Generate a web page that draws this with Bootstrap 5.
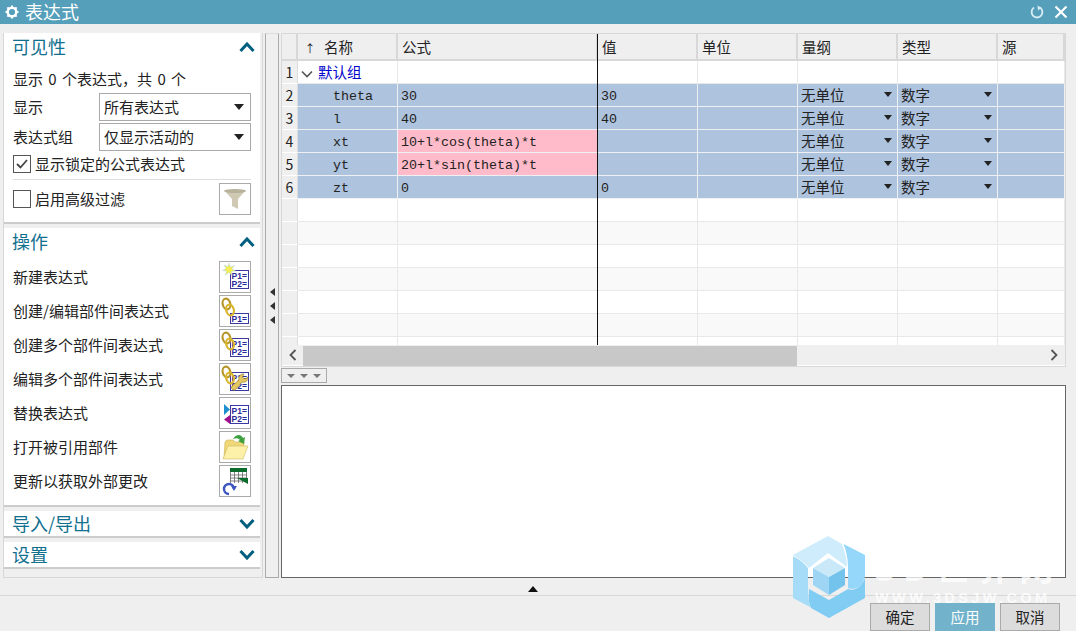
<!DOCTYPE html>
<html lang="zh-CN">
<head>
    <meta charset="UTF-8">
    <title>表达式</title>
    <link href="https://cdn.jsdelivr.net/npm/bootstrap@5.3.0/dist/css/bootstrap.min.css" rel="stylesheet">
    <style>
        html, body { height: 631px; overflow: hidden; }
        body {
            background: #efefef;
            color: #222;
            font-family: "Noto Sans CJK SC", sans-serif;
            font-size: 14.5px;
            line-height: 1.2;
        }
        .app-root { height: 631px; position: relative; overflow: hidden; }
        .title-bar { height: 24px; background: #559fba; color: #fff; font-size: 18px; padding: 0 8px 0 4px; }
        .main-area { height: 545px; margin-top: 9px; padding-left: 3px; gap: 2px; }

        .side-panel { width: 260px; border: 1px solid #d8d8d8; border-top: 0; padding-right: 2px; gap: 4px; font-size: 15px; }
        .side-sec { background: #fff; border-bottom: 2px solid #ccc; }
        .side-head { font-size: 18px; color: #11708f; height: 28px; padding: 0 5px 0 8px; }
        .side-body { padding: 4px 9px 0 9px; }
        .info-line { height: 27px; word-spacing: 2px; }
        .field-row { height: 30px; }
        .field-row label { width: 86px; }
        .field-row .form-select {
            width: 152px; height: 28px; padding: 0 0 0 4px;
            border: 1px solid #aaa; border-radius: 0; color: #222;
            font-size: 15px; font-family: inherit;
            background-image: url("data:image/svg+xml,%3Csvg xmlns='http://www.w3.org/2000/svg' width='10' height='6'%3E%3Cpath d='M0 0h10L5 6z' fill='%23222'/%3E%3C/svg%3E");
            background-size: 10px 6px; background-position: right 6px center;
        }
        .chk-row { height: 24px; gap: 4px; }
        .chk-row .form-check-input {
            width: 18px; height: 18px; margin: 0; border: 1px solid #555; border-radius: 0; flex: none;
            background-color: #fff;
        }
        .chk-row .form-check-input:checked {
            background-color: #fff; border-color: #555;
            background-image: url("data:image/svg+xml,%3Csvg xmlns='http://www.w3.org/2000/svg' viewBox='0 0 18 18'%3E%3Cpath d='M4 9l3.5 3.5L14 5' fill='none' stroke='%23444' stroke-width='1.8'/%3E%3C/svg%3E");
            background-size: 18px 18px;
        }
        .filter-row { height: 39px; border-top: 1px solid #ddd; margin-top: 3px; }
        .tool-btn {
            width: 32px; height: 32px; padding: 0; border: 1px solid #aaa; border-radius: 0;
            background: #fff; display: flex; align-items: center; justify-content: center; flex: none;
        }
        .action-row { height: 34px; }
        .ops-body { padding: 4px 9px 7px 9px; }

        .split-bar { width: 14px; border: 1px solid #aaa; border-top-color: #ddd; gap: 6px; padding-left: 4px; }
        .tri-left { width: 0; height: 0; border-top: 4px solid transparent; border-bottom: 4px solid transparent; border-right: 5px solid #333; }

        .right-col { width: 785px; }
        .grid-box { height: 334px; border: 1px solid #d8d8d8; position: relative; background: #fff; }
        .grid-scroll { height: 311px; overflow: hidden; }
        .expr-grid { table-layout: fixed; width: 783px; border-collapse: separate; border-spacing: 0; }
        .expr-grid th, .expr-grid td {
            height: 23px; padding: 0 3px; font-weight: 400; white-space: nowrap; overflow: hidden;
            border-right: 1px solid #e8e8e8; border-bottom: 1px solid #e8e8e8;
        }
        .expr-grid th { height: 27px; background: #efefef; border-right: 2px solid #d8d8d8; border-bottom: 2px solid #d8d8d8; padding: 1px 0 0 4px; }
        .expr-grid .rownum { background: #efefef; text-align: center; padding: 0; border-right: 1px solid #ddd; border-bottom: 1px solid #fff; font-size: 14px; }
        .expr-grid .mono { font-family: "Liberation Mono", "Noto Sans CJK SC", monospace; font-size: 13.33px; padding-top: 3px; }
        .expr-grid .name-cell { padding-left: 35px; }
        .expr-grid tr.picked td:not(.rownum) { background: #aec3dd; border-color: #eef0f4; }
        .expr-grid tr.picked td.bad-cell { background: #ffbbc9; }
        .expr-grid tr.alt-row td:not(.rownum) { background: #f9f9f9; }
        .sort-mark { display: inline-block; width: 16px; margin-right: 6px; font-size: 11px; text-align: center; }
        .group-name { color: #0000cc; }
        .drop-tri { width: 0; height: 0; border-left: 4.5px solid transparent; border-right: 4.5px solid transparent; border-top: 5px solid #222; margin-right: 2px; }
        .col-mark { position: absolute; left: 315px; top: 0; width: 1px; height: 311px; background: #111; }

        .h-scroll { height: 20px; background: #efefef; }
        .h-thumb { position: absolute; left: 21px; top: 312px; width: 494px; height: 20px; background: #c8c8c8; }
        .h-arrow { width: 22px; }

        .sash-tools { width: 46px; height: 15px; margin: 1px 0 2px; border: 1px solid #aaa; gap: 5px; }
        .tri-down { width: 0; height: 0; border-left: 4px solid transparent; border-right: 4px solid transparent; border-top: 4px solid #777; }
        .note-area { flex: 1; border: 1px solid #666; border-radius: 0; resize: none; background: #fff; }

        .sash-mid { height: 17px; padding: 5px 10px 0 0; }
        .tri-up { width: 0; height: 0; border-left: 5px solid transparent; border-right: 5px solid transparent; border-bottom: 6px solid #111; }
        .foot-bar { border-top: 1px solid #d8d8d8; height: 36px; padding: 7px 16px 0 0; gap: 5px; }
        .foot-bar .btn {
            width: 60px; height: 28px; padding: 0; border: 1px solid #aaa; border-radius: 0;
            background: #dcdcdc; color: #222; font-size: 14.5px; line-height: 26px;
        }
        .foot-bar .btn.btn-apply { background: #72b3cb; border-color: #72b3cb; color: #fff; }

        .wm-logo { position: absolute; left: 793px; top: 536px; pointer-events: none; }
        .wm-text { position: absolute; left: 875px; top: 544px; color: #fff; opacity: .75; pointer-events: none; white-space: nowrap; }
        .wm-big { font-size: 34px; font-weight: 700; line-height: 46px; letter-spacing: 8px; }
        .wm-small { font-family: "Liberation Sans", sans-serif; font-size: 14.5px; font-weight: 700; letter-spacing: 3.4px; line-height: 9px; margin-top: 4px; }
    </style>
</head>
<body>
    <!-- shared bits of the small toolbar icons -->
    <svg width="0" height="0" class="position-absolute">
        <defs>
            <g id="box-two">
                <rect x="10.5" y="8.5" width="18" height="18" fill="#fff" stroke="#3a3aa0"/>
                <text x="11.5" y="16.5" font-family="Liberation Sans" font-size="8.5" font-weight="700" fill="#2a2a9a">P1=</text>
                <text x="11.5" y="25" font-family="Liberation Sans" font-size="8.5" font-weight="700" fill="#2a2a9a">P2=</text>
            </g>
            <g id="links">
                <ellipse cx="6.5" cy="8" rx="3.8" ry="5.4" fill="none" stroke="#b8962a" stroke-width="2.2" transform="rotate(-15 6.5 8)"/>
                <ellipse cx="10" cy="14" rx="3.8" ry="5.4" fill="none" stroke="#d9b52c" stroke-width="2.2" transform="rotate(-15 10 14)"/>
            </g>
        </defs>
    </svg>

    <div class="app-root d-flex flex-column">
        <div class="title-bar d-flex align-items-center">
            <svg width="16" height="16" viewBox="0 0 16 16" style="margin-right:1px">
                <circle cx="8" cy="8" r="4.3" fill="none" stroke="#fff" stroke-width="2.4"/>
                <path d="M8 1.5v2.5M8 12v2.5M1.5 8H4M12 8h2.5M3.4 3.4l1.8 1.8M10.8 10.8l1.8 1.8M3.4 12.6l1.8-1.8M10.8 5.2l1.8-1.8" stroke="#fff" stroke-width="2"/>
            </svg>
            <span class="ms-1">表达式</span>
            <svg width="14" height="14" viewBox="0 0 14 14" class="ms-auto" style="margin-right:10px">
                <path d="M4 2.6A5.4 5.4 0 1 0 10 2.6" fill="none" stroke="#d8eef5" stroke-width="1.8"/>
                <path d="M7.5 0.5L11.5 2.8 8 5.5z" fill="#d8eef5"/>
            </svg>
            <svg width="14" height="14" viewBox="0 0 14 14">
                <path d="M1.5 1.5l11 11M12.5 1.5l-11 11" stroke="#fff" stroke-width="2.2"/>
            </svg>
        </div>

        <div class="main-area d-flex">
            <!-- left panel -->
            <div class="side-panel d-flex flex-column">
                <section class="side-sec" style="height:191px">
                    <div class="side-head d-flex align-items-center justify-content-between">
                        <span>可见性</span>
                        <svg width="16" height="10" viewBox="0 0 16 10"><path d="M1.5 9L8 2l6.500 7" fill="none" stroke="#005f7f" stroke-width="3"/></svg>
                    </div>
                    <div class="side-body">
                        <div class="info-line d-flex align-items-center">显示 0 个表达式，共 0 个</div>
                        <div class="field-row d-flex align-items-center">
                            <label>显示</label>
                            <select class="form-select"><option>所有表达式</option></select>
                        </div>
                        <div class="field-row d-flex align-items-center">
                            <label>表达式组</label>
                            <select class="form-select"><option>仅显示活动的</option></select>
                        </div>
                        <div class="chk-row d-flex align-items-center">
                            <input class="form-check-input" type="checkbox" checked>
                            <span>显示锁定的公式表达式</span>
                        </div>
                        <div class="filter-row d-flex align-items-center justify-content-between">
                            <div class="chk-row d-flex align-items-center">
                                <input class="form-check-input" type="checkbox">
                                <span>启用高级过滤</span>
                            </div>
                            <button class="tool-btn" type="button">
                                <svg width="24" height="24" viewBox="0 0 24 24"><path d="M1 3h22L15 12v10l-6-3v-7z" fill="#cfc9b4"/><ellipse cx="12" cy="4" rx="11" ry="2" fill="#b8b29c"/></svg>
                            </button>
                        </div>
                    </div>
                </section>

                <section class="side-sec" style="height:279px">
                    <div class="side-head d-flex align-items-center justify-content-between">
                        <span>操作</span>
                        <svg width="16" height="10" viewBox="0 0 16 10"><path d="M1.5 9L8 2l6.500 7" fill="none" stroke="#005f7f" stroke-width="3"/></svg>
                    </div>
                    <div class="ops-body">
                        <div class="action-row d-flex align-items-center justify-content-between">
                            <span>新建表达式</span>
                            <button class="tool-btn" type="button">
                                <svg width="30" height="30" viewBox="0 0 30 30">
                                    <use href="#box-two"/>
                                    <path d="M9 1l1.500 4 4-1.500-2.500 3.500 3.500 2-4 .5.500 4-3-3-3.500 2.500 1-4-4-.5 3.500-2-2-3.500 4 1.500z" fill="#f4ee50" stroke="#bcd8f0" stroke-width=".6"/>
                                </svg>
                            </button>
                        </div>
                        <div class="action-row d-flex align-items-center justify-content-between">
                            <span>创建/编辑部件间表达式</span>
                            <button class="tool-btn" type="button">
                                <svg width="30" height="30" viewBox="0 0 30 30">
                                    <rect x="10.500" y="17.500" width="18" height="10" fill="#fff" stroke="#3a3aa0"/>
                                    <text x="11.500" y="26" font-family="Liberation Sans" font-size="8.500" font-weight="700" fill="#2a2a9a">P1=</text>
                                    <use href="#links"/>
                                </svg>
                            </button>
                        </div>
                        <div class="action-row d-flex align-items-center justify-content-between">
                            <span>创建多个部件间表达式</span>
                            <button class="tool-btn" type="button">
                                <svg width="30" height="30" viewBox="0 0 30 30"><use href="#box-two"/><use href="#links"/></svg>
                            </button>
                        </div>
                        <div class="action-row d-flex align-items-center justify-content-between">
                            <span>编辑多个部件间表达式</span>
                            <button class="tool-btn" type="button">
                                <svg width="30" height="30" viewBox="0 0 30 30">
                                    <use href="#box-two"/><use href="#links"/>
                                    <path d="M28 13a4.500 4.500 0 0 1-6 5l-6 7a2.500 2.500 0 0 1-4-3l7-6a4.500 4.500 0 0 1 5-6l-2 3 3 2z" fill="#e6c860" stroke="#9a8430" stroke-width=".7"/>
                                </svg>
                            </button>
                        </div>
                        <div class="action-row d-flex align-items-center justify-content-between">
                            <span>替换表达式</span>
                            <button class="tool-btn" type="button">
                                <svg width="30" height="30" viewBox="0 0 30 30">
                                    <g transform="translate(0,-1)"><use href="#box-two"/></g>
                                    <path d="M4 6l6 5.500-6 5.500z" fill="#1f8fd0"/>
                                    <path d="M10 17v9l-6-4.500z" fill="#a0108c"/>
                                </svg>
                            </button>
                        </div>
                        <div class="action-row d-flex align-items-center justify-content-between">
                            <span>打开被引用部件</span>
                            <button class="tool-btn" type="button">
                                <svg width="30" height="30" viewBox="0 0 30 30">
                                    <path d="M4 26L5 10l2-2h6l2 2h9v6z" fill="#f0d878" stroke="#c8b058" stroke-width=".6"/>
                                    <path d="M3 27L8 14h20l-5 13z" fill="#fdf0a8" stroke="#d0b860" stroke-width=".6"/>
                                    <path d="M13 7c3-5 8-5 10-1l2-1-1 7-6-3 2-1c-2-2-4-2-7-1z" fill="#3fa03f"/>
                                </svg>
                            </button>
                        </div>
                        <div class="action-row d-flex align-items-center justify-content-between">
                            <span>更新以获取外部更改</span>
                            <button class="tool-btn" type="button">
                                <svg width="30" height="30" viewBox="0 0 30 30">
                                    <rect x="10" y="2" width="17" height="4" fill="#0d6b2c"/>
                                    <path d="M10.500 6v11M14.500 6v11M18.500 6v11M22.500 6v11M26.500 6v11M10 9h17M10 12h17M10 15h17" stroke="#666" stroke-width=".8"/>
                                    <path d="M17 12l11 6v-6z" fill="#0d6b2c"/>
                                    <path d="M14 23A5 5 0 1 0 9 28" fill="none" stroke="#3d56c0" stroke-width="2.400"/>
                                    <path d="M11 20h6l-3 5z" fill="#3d56c0"/>
                                </svg>
                            </button>
                        </div>
                    </div>
                </section>

                <section class="side-sec">
                    <div class="side-head d-flex align-items-center justify-content-between" style="height:25px">
                        <span>导入/导出</span>
                        <svg width="16" height="10" viewBox="0 0 16 10"><path d="M1.500 1L8 8l6.500-7" fill="none" stroke="#005f7f" stroke-width="3"/></svg>
                    </div>
                </section>
                <section class="side-sec">
                    <div class="side-head d-flex align-items-center justify-content-between" style="height:25px">
                        <span>设置</span>
                        <svg width="16" height="10" viewBox="0 0 16 10"><path d="M1.500 1L8 8l6.500-7" fill="none" stroke="#005f7f" stroke-width="3"/></svg>
                    </div>
                </section>
            </div>

            <!-- sash between panel and grid -->
            <div class="split-bar d-flex flex-column justify-content-center">
                <span class="tri-left"></span>
                <span class="tri-left"></span>
                <span class="tri-left"></span>
            </div>

            <!-- expression grid and note area -->
            <div class="right-col d-flex flex-column">
                <div class="grid-box">
                    <div class="grid-scroll">
                        <table class="expr-grid">
                            <colgroup>
                                <col style="width:16px"><col style="width:100px"><col style="width:200px"><col style="width:100px">
                                <col style="width:100px"><col style="width:100px"><col style="width:100px"><col style="width:67px">
                            </colgroup>
                            <thead>
                                <tr>
                                    <th></th>
                                    <th><span class="sort-mark">↑</span>名称</th>
                                    <th>公式</th><th>值</th><th>单位</th><th>量纲</th><th>类型</th><th>源</th>
                                </tr>
                            </thead>
                            <tbody id="gridRows"></tbody>
                        </table>
                    </div>
                    <div class="h-scroll d-flex align-items-center justify-content-between">
                        <span class="h-arrow d-flex justify-content-center">
                            <svg width="8" height="12" viewBox="0 0 8 12"><path d="M6.500 1L1.500 6l5 5" fill="none" stroke="#555" stroke-width="1.800"/></svg>
                        </span>
                        <span class="h-arrow d-flex justify-content-center">
                            <svg width="8" height="12" viewBox="0 0 8 12"><path d="M1.500 1l5 5-5 5" fill="none" stroke="#555" stroke-width="1.800"/></svg>
                        </span>
                    </div>
                    <div class="h-thumb"></div>
                    <div class="col-mark"></div>
                </div>
                <div class="sash-tools d-flex align-items-center justify-content-center">
                    <span class="tri-down"></span><span class="tri-down"></span><span class="tri-down"></span>
                </div>
                <textarea class="note-area"></textarea>
            </div>
        </div>

        <div class="sash-mid d-flex align-items-center justify-content-center"><span class="tri-up"></span></div>
        <div class="foot-bar d-flex justify-content-end">
            <button class="btn" type="button">确定</button>
            <button class="btn btn-apply" type="button">应用</button>
            <button class="btn" type="button">取消</button>
        </div>

        <!-- watermark over the bottom right corner -->
        <svg class="wm-logo" width="72" height="82" viewBox="0 0 72 82">
            <path d="M0 19L35 0l14 8c3 8 5 16 5 23L35 17 16 32C11 26 5 22 0 19z" fill="#cfecfc"/>
            <path d="M50.500 8L72 19v21c-2 10-10 15-17 12V31c0-9-2-17-4.500-23z" fill="#94d7fa"/>
            <path d="M72 42v20L36 82 18 72c-3-6-2-14-2-19l20 11 19-11c7 3 14-3 17-11z" fill="#80ccf3"/>
            <path d="M0 20c6 3 11 7 15 12v20c0 8 1 14 2 19L0 62z" fill="#a6dcf7"/>
            <path d="M36 22l16 10-16 9-16-9z" fill="#c9e9f9"/>
            <path d="M20 32l16 9v18l-16-10z" fill="#9fd5f4"/>
            <path d="M52 32l-16 9v18l16-10z" fill="#74c3ec"/>
        </svg>
        <div class="wm-text">
            <div class="wm-big">3D世界网</div>
            <div class="wm-small">WWW.3DSJW.COM</div>
        </div>
    </div>

    <script>
        // Grid rows
        const rows = [
            { name: 'theta', formula: '30', value: '30' },
            { name: 'l', formula: '40', value: '40' },
            { name: 'xt', formula: '10+l*cos(theta)*t', value: '', bad: true },
            { name: 'yt', formula: '20+l*sin(theta)*t', value: '', bad: true },
            { name: 'zt', formula: '0', value: '0' }
        ];

        const dropCell = (text) => `
            <td><div class="d-flex align-items-center justify-content-between">${text}<span class="drop-tri"></span></div></td>`;

        let html = `<tr>
            <td class="rownum">1</td>
            <td><svg width="12" height="8" viewBox="0 0 12 8" style="margin-right:5px"><path d="M1 1.500l5 5 5-5" fill="none" stroke="#555" stroke-width="1.600"/></svg><span class="group-name">默认组</span></td>
            <td></td><td></td><td></td><td></td><td></td><td></td>
        </tr>`;

        rows.forEach((row, i) => {
            html += `<tr class="picked">
                <td class="rownum">${i + 2}</td>
                <td class="mono name-cell">${row.name}</td>
                <td class="mono ${row.bad ? 'bad-cell' : ''}">${row.formula}</td>
                <td class="mono">${row.value}</td>
                <td></td>
                ${dropCell('无单位')}
                ${dropCell('数字')}
                <td></td>
            </tr>`;
        });

        // Empty rows, every other one shaded
        for (let i = 7; i <= 13; i++) {
            html += `<tr class="${i % 2 === 0 ? 'alt-row' : ''}"><td class="rownum"></td><td></td><td></td><td></td><td></td><td></td><td></td><td></td></tr>`;
        }
        document.getElementById('gridRows').innerHTML = html;
    </script>
    <script src="https://cdn.jsdelivr.net/npm/bootstrap@5.3.0/dist/js/bootstrap.bundle.min.js"></script>
</body>
</html>
